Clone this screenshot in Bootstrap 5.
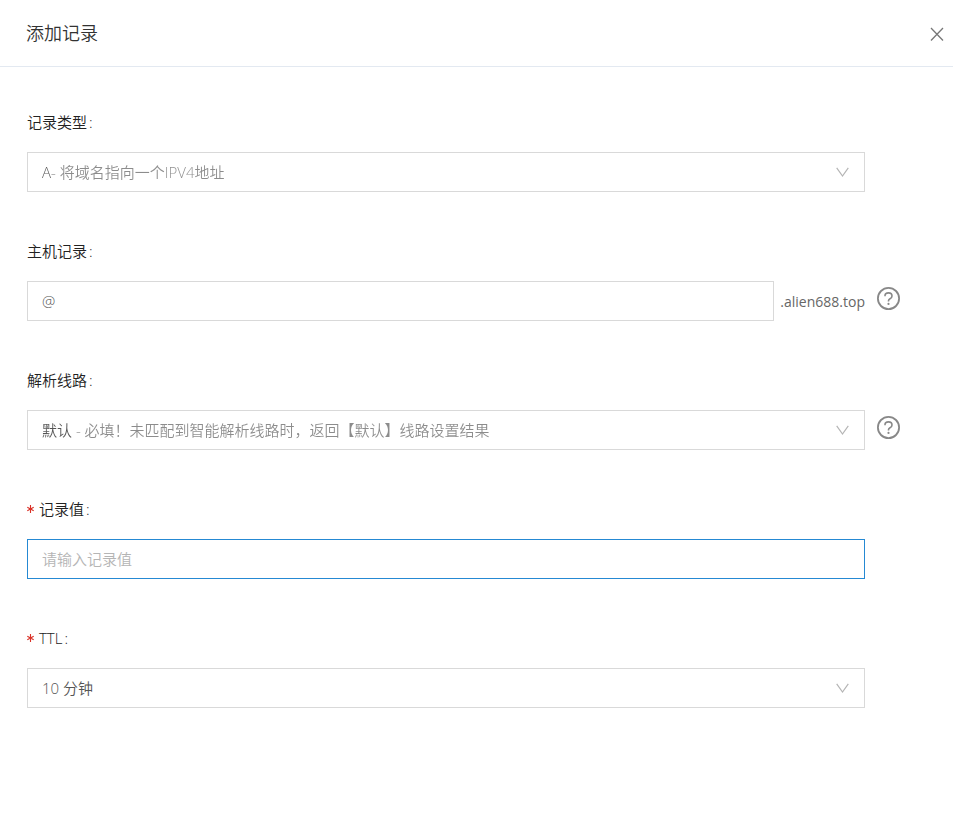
<!DOCTYPE html>
<html lang="zh-CN">
<head>
<meta charset="utf-8">
<meta name="viewport" content="width=device-width, initial-scale=1">
<title>添加记录</title>
<link href="https://cdn.jsdelivr.net/npm/bootstrap@5.3.0/dist/css/bootstrap.min.css" rel="stylesheet">
<style>
body{font-family:"Open Sans","Noto Sans CJK SC",sans-serif;font-size:15px;font-weight:350;line-height:24px;color:#222;background:#fff}
.panel-head{height:67px;padding:0 8px 0 26px;border-bottom:1px solid #e3e9f1}
.panel-title{font-size:18px;font-weight:350;color:#333;line-height:28px}
.close-btn{width:16px;height:18px;color:#777}
.record-form{padding:43px 53px 40px 27px;gap:47px}
.field-label{margin-bottom:18px;line-height:24px}
.field-label::after{content:":";margin-left:2px}
.star{color:#d93026;width:8px;height:8px}
.field-line{gap:12px}
.box,.box:focus{height:40px;padding:0 14px;border:1px solid #d9d9d9;border-radius:0;font-size:15px;font-weight:350;line-height:24px;color:#555;box-shadow:none}
.box::placeholder{color:#b5b5b5}
.box-active,.box-active:focus{border-color:#2589d3}
select.box,select.box:focus{appearance:none;width:100%;background:#fff;outline:0}
select.two-tone,select.two-tone:focus{-webkit-text-fill-color:transparent;background:linear-gradient(90deg,#555 var(--tone),#8c8c8c var(--tone)) text;-webkit-background-clip:text}
select.two-tone option{-webkit-text-fill-color:#555}
.tone-type{--tone:24px}
.tone-line{--tone:46px}
.chevron{position:absolute;right:15px;top:13px;width:14px;height:14px;pointer-events:none}
.suffix{margin-left:6px;color:#666;font-size:14px;font-weight:400;padding-top:2px}
.help-slot{width:23px;height:40px;padding-top:6px}
.help-btn{width:23px;height:23px;color:#888}
</style>
<script src="https://cdn.jsdelivr.net/npm/bootstrap@5.3.0/dist/js/bootstrap.bundle.min.js"></script>
</head>
<body>
<svg class="d-none" aria-hidden="true">
  <symbol id="chev" viewBox="0 0 14 14"><path d="M.7 2.8L6.5 11l5.8-8.2" fill="none" stroke="#b5b5b5" stroke-width="1.2"/></symbol>
  <symbol id="help" viewBox="0 0 23 23"><circle cx="11.5" cy="11.5" r="10.6" fill="none" stroke="currentColor" stroke-width="1.8"/><path d="M8 9.2V8.8C8 7 9.5 5.9 11.5 5.9S15 7.1 15 8.9c0 1.4-.8 2.2-2 2.8-1.1.6-1.5 1-1.5 2.1v.6" fill="none" stroke="currentColor" stroke-width="1.6"/><circle cx="11.5" cy="16.9" r="1.1" fill="currentColor"/></symbol>
  <symbol id="star" viewBox="0 0 8 8"><path d="M3.5 0v8M.3 2.2l6.4 3.6M6.7 2.2L.3 5.8" fill="none" stroke="currentColor" stroke-width="1.1"/></symbol>
</svg>
<header class="panel-head d-flex align-items-center justify-content-between">
  <h1 class="panel-title mb-0">添加记录</h1>
  <button type="button" class="close-btn btn p-0 border-0 d-flex align-items-end" aria-label="关闭"><svg width="16" height="16" viewBox="0 0 16 16"><path d="M2 2l12 12.5M14 2L2 14.5" fill="none" stroke="currentColor" stroke-width="1.3"/></svg></button>
</header>
<main>
<form class="record-form d-flex flex-column">
  <div>
    <label class="field-label d-flex align-items-center" for="type">记录类型</label>
    <div class="field-line d-flex">
      <div class="position-relative flex-grow-1"><select id="type" class="box two-tone tone-type"><option>A- 将域名指向一个IPV4地址</option></select><svg class="chevron"><use href="#chev"/></svg></div>
      <div class="help-slot"></div>
    </div>
  </div>
  <div>
    <label class="field-label d-flex align-items-center" for="host">主机记录</label>
    <div class="field-line d-flex">
      <div class="d-flex flex-grow-1 align-items-center"><input id="host" type="text" class="form-control box" value="@"><span class="suffix">.alien688.top</span></div>
      <div class="help-slot"><button type="button" class="help-btn btn p-0 border-0 d-flex" aria-label="帮助"><svg width="23" height="23"><use href="#help"/></svg></button></div>
    </div>
  </div>
  <div>
    <label class="field-label d-flex align-items-center" for="line">解析线路</label>
    <div class="field-line d-flex">
      <div class="position-relative flex-grow-1"><select id="line" class="box two-tone tone-line"><option>默认 - 必填！未匹配到智能解析线路时，返回【默认】线路设置结果</option></select><svg class="chevron"><use href="#chev"/></svg></div>
      <div class="help-slot"><button type="button" class="help-btn btn p-0 border-0 d-flex" aria-label="帮助"><svg width="23" height="23"><use href="#help"/></svg></button></div>
    </div>
  </div>
  <div>
    <label class="field-label d-flex align-items-center" for="value"><svg class="star me-1"><use href="#star"/></svg>记录值</label>
    <div class="field-line d-flex">
      <input id="value" type="text" class="form-control box box-active flex-grow-1" placeholder="请输入记录值">
      <div class="help-slot flex-shrink-0"></div>
    </div>
  </div>
  <div>
    <label class="field-label d-flex align-items-center" for="ttl"><svg class="star me-1"><use href="#star"/></svg>TTL</label>
    <div class="field-line d-flex">
      <div class="position-relative flex-grow-1"><select id="ttl" class="box"><option>10 分钟</option></select><svg class="chevron"><use href="#chev"/></svg></div>
      <div class="help-slot"></div>
    </div>
  </div>
</form>
</main>
</body>
</html>
